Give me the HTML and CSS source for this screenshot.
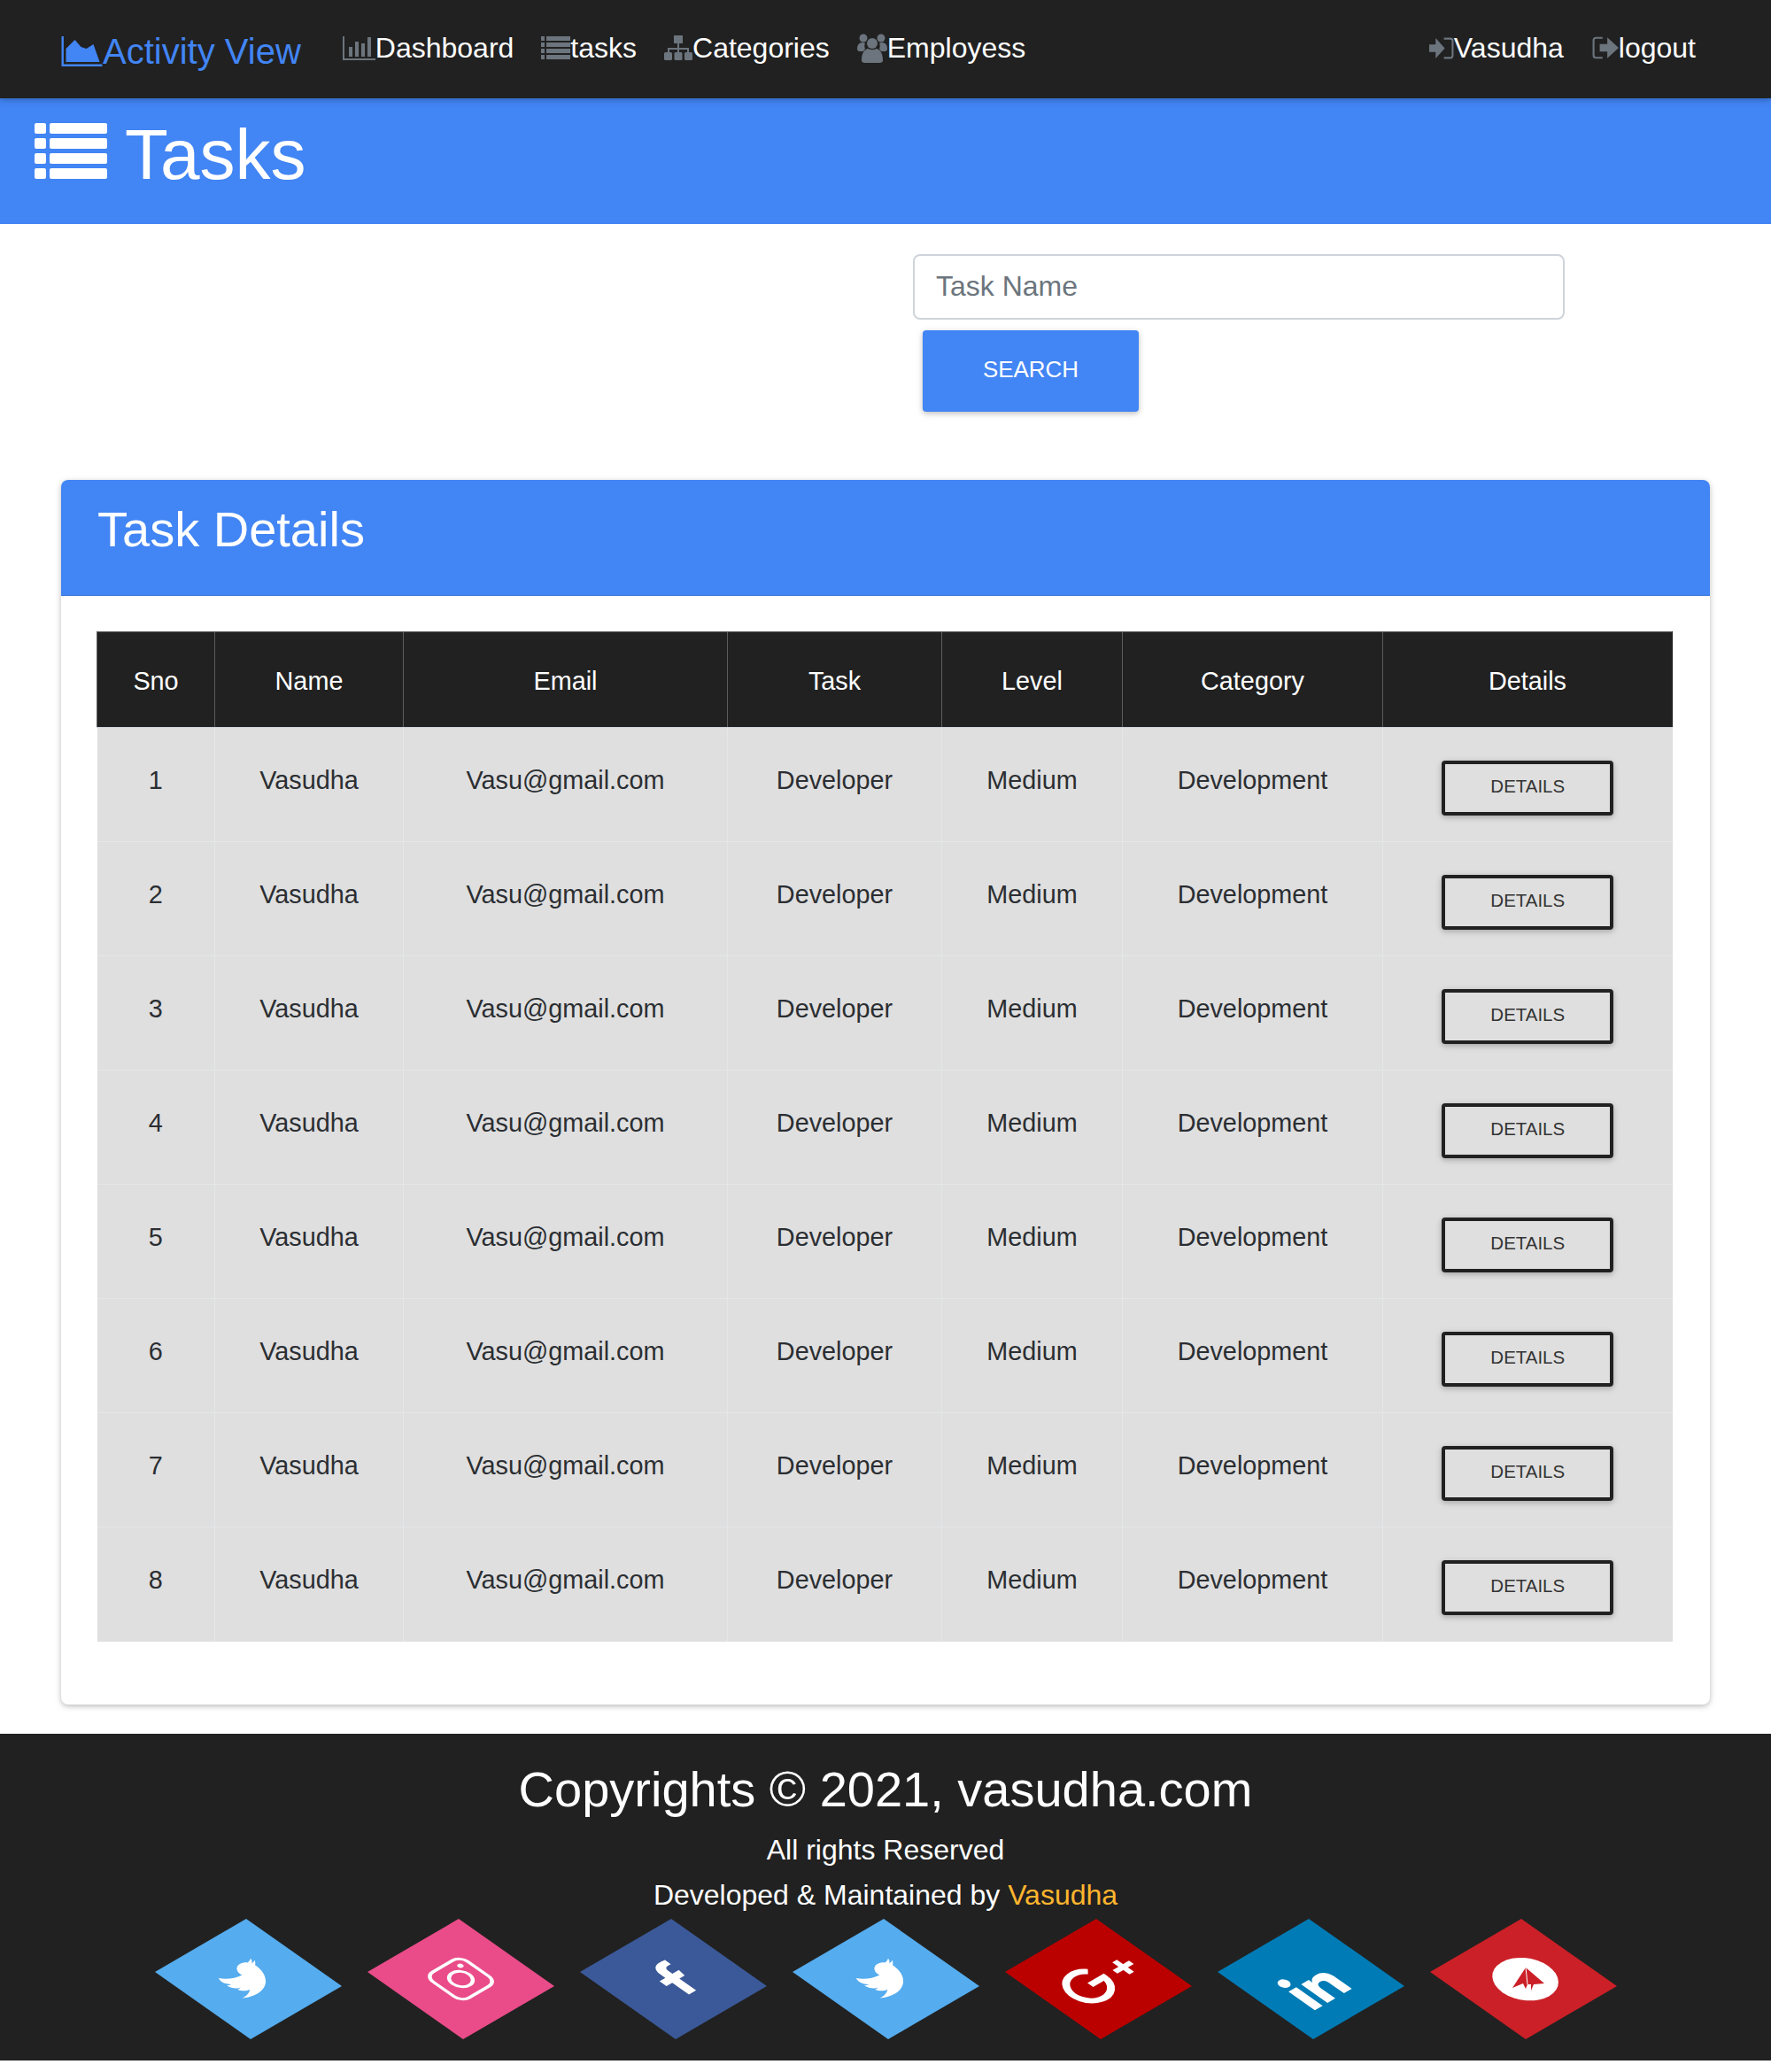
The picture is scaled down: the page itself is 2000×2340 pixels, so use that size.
FILE: index.html
```html
<!DOCTYPE html>
<html lang="en">
<head>
    <meta charset="UTF-8">
    <meta name="viewport" content="width=device-width, initial-scale=1.0">
    <title>Activity View - Tasks</title>
    <link rel="stylesheet" href="styles.css">
</head>
<body>

<nav class="navbar">
    <a class="brand" href="#">
        <svg class="brand-icon" viewBox="0 0 46 34"><path d="M1.2 0V32.8H46" fill="none" stroke="currentColor" stroke-width="2.4"/><path d="M5 29V14L15 4 22 12 28 14 36 9 43 29Z" fill="currentColor"/></svg>Activity View
    </a>
    <ul class="nav-links">
        <li><a href="#">
            <svg class="ico ico-bar" viewBox="0 0 37 27"><path d="M1 0V26H37" fill="none" stroke="currentColor" stroke-width="2"/><path d="M7 12h4v11H7zM14 6h4v17h-4zM21 8h4v15h-4zM28 1h4v22h-4z" fill="currentColor"/></svg>Dashboard</a></li>
        <li><a href="#">
            <svg class="ico ico-list" viewBox="0 0 33 26"><path d="M0 0h4v5H0zM6 0h27v5H6zM0 7h4v5H0zM6 7h27v5H6zM0 14h4v5H0zM6 14h27v5H6zM0 21h4v5H0zM6 21h27v5H6z" fill="currentColor"/></svg>tasks</a></li>
        <li><a href="#">
            <svg class="ico ico-map" viewBox="0 0 32 29"><path d="M11 0h10v9H11zM15 9h2v5h11v5h-2v-3H17v3h-2v-3H6v3H4v-5h11z" fill="currentColor"/><rect x="0" y="19" width="9" height="9" rx="1.5" fill="currentColor"/><rect x="11.5" y="19" width="9" height="9" rx="1.5" fill="currentColor"/><rect x="23" y="19" width="9" height="9" rx="1.5" fill="currentColor"/></svg>Categories</a></li>
        <li><a href="#">
            <svg class="ico ico-group" viewBox="0 0 34 33"><circle cx="7" cy="5" r="4.5" fill="currentColor"/><circle cx="27" cy="5" r="4.5" fill="currentColor"/><path d="M0 17c0-4 2-7 6-7 1 0 2 0 3 1-1 2-1 4 0 6l-2 3H3c-2 0-3-1-3-3zM34 17c0-4-2-7-6-7-1 0-2 0-3 1 1 2 1 4 0 6l2 3h4c2 0 3-1 3-3z" fill="currentColor"/><circle cx="17" cy="11" r="6" fill="currentColor"/><path d="M5 30c0-8 3-12 7-13 3 1.500 7 1.500 10 0 4 1 7 5 7 13 0 2-1 3-4 3H9c-3 0-4-1-4-3z" fill="currentColor"/></svg>Employess</a></li>
    </ul>
    <ul class="nav-links nav-right">
        <li><a href="#">
            <svg class="ico ico-in" viewBox="0 0 27 24"><path d="M0 8h7V1l10 11-10 11v-7H0z" fill="currentColor"/><path d="M16 1.500h7a2.500 2.500 0 0 1 2.500 2.500v16a2.500 2.500 0 0 1-2.500 2.500h-7" fill="none" stroke="currentColor" stroke-width="2"/></svg>Vasudha</a></li>
        <li><a href="#">
            <svg class="ico ico-out" viewBox="0 0 28 24"><path d="M11 1.500H4A2.500 2.500 0 0 0 1.500 4v16A2.500 2.500 0 0 0 4 22.500h7" fill="none" stroke="currentColor" stroke-width="2"/><path d="M8 8h8V1l12 11-12 11v-7H8z" fill="currentColor"/></svg>logout</a></li>
    </ul>
</nav>

<header class="page-head">
    <svg class="head-icon" viewBox="0 0 82 63"><g fill="#fff"><rect width="13" height="12" rx="2"/><rect x="17" width="65" height="12" rx="2"/><rect y="17" width="13" height="12" rx="2"/><rect x="17" y="17" width="65" height="12" rx="2"/><rect y="34" width="13" height="12" rx="2"/><rect x="17" y="34" width="65" height="12" rx="2"/><rect y="51" width="13" height="12" rx="2"/><rect x="17" y="51" width="65" height="12" rx="2"/></g></svg>
    <h1>Tasks</h1>
</header>

<form class="search-form">
    <input type="text" class="search-input" placeholder="Task Name">
    <button type="button" class="search-btn">SEARCH</button>
</form>

<section class="card">
    <div class="card-head">
        <h3>Task Details</h3>
    </div>
    <div class="card-body">
        <table class="task-table">
            <colgroup>
                <col class="col-sno"><col class="col-name"><col class="col-email"><col class="col-task"><col class="col-level"><col class="col-cat"><col class="col-det">
            </colgroup>
            <thead>
                <tr><th>Sno</th><th>Name</th><th>Email</th><th>Task</th><th>Level</th><th>Category</th><th>Details</th></tr>
            </thead>
            <tbody>
                <tr><td>1</td><td>Vasudha</td><td>Vasu@gmail.com</td><td>Developer</td><td>Medium</td><td>Development</td><td><button type="button" class="details-btn">DETAILS</button></td></tr>
                <tr><td>2</td><td>Vasudha</td><td>Vasu@gmail.com</td><td>Developer</td><td>Medium</td><td>Development</td><td><button type="button" class="details-btn">DETAILS</button></td></tr>
                <tr><td>3</td><td>Vasudha</td><td>Vasu@gmail.com</td><td>Developer</td><td>Medium</td><td>Development</td><td><button type="button" class="details-btn">DETAILS</button></td></tr>
                <tr><td>4</td><td>Vasudha</td><td>Vasu@gmail.com</td><td>Developer</td><td>Medium</td><td>Development</td><td><button type="button" class="details-btn">DETAILS</button></td></tr>
                <tr><td>5</td><td>Vasudha</td><td>Vasu@gmail.com</td><td>Developer</td><td>Medium</td><td>Development</td><td><button type="button" class="details-btn">DETAILS</button></td></tr>
                <tr><td>6</td><td>Vasudha</td><td>Vasu@gmail.com</td><td>Developer</td><td>Medium</td><td>Development</td><td><button type="button" class="details-btn">DETAILS</button></td></tr>
                <tr><td>7</td><td>Vasudha</td><td>Vasu@gmail.com</td><td>Developer</td><td>Medium</td><td>Development</td><td><button type="button" class="details-btn">DETAILS</button></td></tr>
                <tr><td>8</td><td>Vasudha</td><td>Vasu@gmail.com</td><td>Developer</td><td>Medium</td><td>Development</td><td><button type="button" class="details-btn">DETAILS</button></td></tr>
            </tbody>
        </table>
    </div>
</section>

<footer class="footer">
    <h2>Copyrights © 2021, vasudha.com</h2>
    <p class="rights">All rights Reserved</p>
    <p class="credit">Developed &amp; Maintained by <a href="#">Vasudha</a></p>
    <div class="socials">
        <!-- twitter -->
        <svg class="social" viewBox="0 0 211 136"><g transform="matrix(1.03 -0.6 1.08 0.76 0 60)"><rect width="100" height="100" fill="#55acee"/><path transform="translate(30 30) scale(.078)" fill="#fff" d="M459.37 151.716c.325 4.548.325 9.097.325 13.645 0 138.72-105.583 298.558-298.558 298.558-59.452 0-114.68-17.219-161.137-47.106 8.447.974 16.568 1.299 25.34 1.299 49.055 0 94.213-16.568 130.274-44.832-46.132-.975-84.792-31.188-98.112-72.772 6.498.974 12.995 1.624 19.818 1.624 9.421 0 18.843-1.3 27.614-3.573-48.081-9.747-84.143-51.98-84.143-102.985v-1.299c13.969 7.797 30.214 12.67 47.431 13.319-28.264-18.843-46.781-51.005-46.781-87.391 0-19.492 5.197-37.36 14.294-52.954 51.655 63.675 129.3 105.258 216.365 109.807-1.624-7.797-2.599-15.918-2.599-24.04 0-57.828 46.782-104.934 104.934-104.934 30.213 0 57.502 12.67 76.67 33.137 23.715-4.548 46.456-13.32 66.599-25.34-7.798 24.366-24.366 46.132-46.133 59.102 21.117-2.273 41.584-8.122 60.426-16.243-14.292 20.791-32.161 39.308-52.628 54.253z"/></g></svg>
        <!-- instagram -->
        <svg class="social" viewBox="0 0 211 136"><g transform="matrix(1.03 -0.6 1.08 0.76 0 60)"><rect width="100" height="100" fill="#ea4c89"/><rect x="31" y="31" width="38" height="38" rx="8" fill="none" stroke="#fff" stroke-width="3"/><circle cx="50" cy="50" r="9" fill="none" stroke="#fff" stroke-width="3"/><circle cx="61" cy="39" r="2.400" fill="#fff"/></g></svg>
        <!-- facebook -->
        <svg class="social" viewBox="0 0 211 136"><g transform="matrix(1.03 -0.6 1.08 0.76 0 60)"><rect width="100" height="100" fill="#3b5998"/><path transform="translate(38 30) scale(.078)" fill="#fff" d="M279.14 288l14.22-92.66h-88.91v-60.13c0-25.35 12.42-50.06 52.24-50.06h40.42V6.26S260.43 0 225.36 0c-73.22 0-121.08 44.38-121.08 124.72v70.62H22.89V288h81.39v224h100.17V288z"/></g></svg>
        <!-- twitter -->
        <svg class="social" viewBox="0 0 211 136"><g transform="matrix(1.03 -0.6 1.08 0.76 0 60)"><rect width="100" height="100" fill="#55acee"/><path transform="translate(30 30) scale(.078)" fill="#fff" d="M459.37 151.716c.325 4.548.325 9.097.325 13.645 0 138.72-105.583 298.558-298.558 298.558-59.452 0-114.68-17.219-161.137-47.106 8.447.974 16.568 1.299 25.34 1.299 49.055 0 94.213-16.568 130.274-44.832-46.132-.975-84.792-31.188-98.112-72.772 6.498.974 12.995 1.624 19.818 1.624 9.421 0 18.843-1.3 27.614-3.573-48.081-9.747-84.143-51.98-84.143-102.985v-1.299c13.969 7.797 30.214 12.67 47.431 13.319-28.264-18.843-46.781-51.005-46.781-87.391 0-19.492 5.197-37.36 14.294-52.954 51.655 63.675 129.3 105.258 216.365 109.807-1.624-7.797-2.599-15.918-2.599-24.04 0-57.828 46.782-104.934 104.934-104.934 30.213 0 57.502 12.67 76.67 33.137 23.715-4.548 46.456-13.32 66.599-25.34-7.798 24.366-24.366 46.132-46.133 59.102 21.117-2.273 41.584-8.122 60.426-16.243-14.292 20.791-32.161 39.308-52.628 54.253z"/></g></svg>
        <!-- google plus -->
        <svg class="social" viewBox="0 0 211 136"><g transform="matrix(1.03 -0.6 1.08 0.76 0 60)"><rect width="100" height="100" fill="#bb0000"/><path d="M50 39A17 17 0 1 0 55 51H40" fill="none" stroke="#fff" stroke-width="6"/><path d="M66 52H84M75 43V61" fill="none" stroke="#fff" stroke-width="5"/></g></svg>
        <!-- linkedin -->
        <svg class="social" viewBox="0 0 211 136"><g transform="matrix(1.03 -0.6 1.08 0.76 0 60)"><rect width="100" height="100" fill="#007bb5"/><path transform="translate(25 36) scale(.092)" fill="#fff" d="M100.28 448H7.4V148.9h92.88zM53.79 108.1C24.09 108.1 0 83.5 0 53.8a53.79 53.79 0 0 1 107.58 0c0 29.7-24.1 54.3-53.79 54.3zM447.9 448h-92.68V302.4c0-34.7-.7-79.2-48.29-79.2-48.29 0-55.69 37.7-55.69 76.7V448h-92.78V148.9h89.08v40.8h1.3c12.4-23.5 42.69-48.3 87.88-48.3 94 0 111.28 61.9 111.28 142.3V448z"/></g></svg>
        <!-- send -->
        <svg class="social" viewBox="0 0 211 136"><g transform="matrix(1.03 -0.6 1.08 0.76 0 60)"><rect width="100" height="100" fill="#cb2027"/><circle cx="51" cy="51" r="25" fill="#fff"/></g><path d="M108 55 93 78 105 73 108 79 110 74 114 74 114 81 117 74 129 73Z" fill="#cb2027"/><path d="M108 55 110 74" stroke="#fff" stroke-width="1"/></svg>
    </div>
</footer>

</body>
</html>
```

FILE: styles.css
```css
* {
    box-sizing: border-box;
}
body {
    margin: 0;
    font-family: "Liberation Sans", Arial, sans-serif;
    background-color: #fff;
    color: #212529;
}
a {
    text-decoration: none;
}
h1, h2, h3, p {
    margin: 0;
    font-weight: 400;
}

/* navbar */
.navbar {
    position: relative;
    display: flex;
    align-items: flex-start;
    height: 111px;
    padding: 28px 69px 0;
    background-color: #212121;
    box-shadow: 0 2px 5px rgba(0, 0, 0, 0.16), 0 2px 10px rgba(0, 0, 0, 0.12);
}
.brand {
    display: flex;
    align-items: center;
    font-size: 40px;
    line-height: 60px;
    color: #4285f4;
    margin-right: 31.5px;
}
.brand-icon {
    width: 47px;
    height: 34px;
}
.nav-links {
    display: flex;
    list-style: none;
    margin: 2px 0 0;
    padding: 0;
}
.nav-links a {
    display: flex;
    align-items: center;
    padding: 0 15.5px;
    font-size: 32px;
    line-height: 48px;
    color: #fff;
}
.nav-right {
    margin-left: auto;
}
.nav-right a {
    padding: 0 16px;
}
.ico {
    color: #6c757d;
    flex-shrink: 0;
}
.ico-bar {
    width: 37px;
    height: 27px;
}
.ico-list {
    width: 33px;
    height: 26px;
}
.ico-map {
    width: 32px;
    height: 29px;
}
.ico-group {
    width: 34px;
    height: 33px;
}
.ico-in {
    width: 28px;
    height: 25px;
}
.ico-out {
    width: 30px;
    height: 26px;
}

/* page heading */
.page-head {
    display: flex;
    align-items: flex-start;
    height: 142px;
    padding: 16px 0 0 39px;
    background-color: #4285f4;
}
.head-icon {
    width: 82px;
    height: 63px;
    margin: 12px 20px 0 0;
}
.page-head h1 {
    font-size: 80px;
    line-height: 96px;
    color: #fff;
}

/* search */
.search-form {
    width: 736px;
    margin: 34px 0 0 1031px;
}
.search-input {
    display: block;
    width: 100%;
    height: 74px;
    padding: 0 24px 2px;
    border: 2px solid #ced4da;
    border-radius: 8px;
    font-family: inherit;
    font-size: 32px;
    color: #495057;
}
.search-input::placeholder {
    color: #6c757d;
    opacity: 1;
}
.search-btn {
    display: block;
    width: 244px;
    height: 92px;
    margin: 12px 0 0 11px;
    padding: 0 0 3px;
    border: none;
    border-radius: 4px;
    background-color: #4285f4;
    color: #fff;
    font-family: inherit;
    font-size: 25.92px;
    box-shadow: 0 2px 5px rgba(0, 0, 0, 0.16), 0 2px 10px rgba(0, 0, 0, 0.12);
}

/* card */
.card {
    margin: 77px 69px 33px;
    border-radius: 8px;
    background-color: #fff;
    box-shadow: 0 2px 5px rgba(0, 0, 0, 0.16), 0 2px 10px rgba(0, 0, 0, 0.12);
}
.card-head {
    height: 131px;
    padding: 22px 41px 0;
    background-color: #4285f4;
    border-radius: 8px 8px 0 0;
    border-bottom: 1px solid #3b78dc;
}
.card-head h3 {
    font-size: 56px;
    line-height: 67px;
    color: #fff;
}
.card-body {
    padding: 40px 43px 71px 40px;
}
.task-table {
    width: 1779px;
    table-layout: fixed;
    border-collapse: collapse;
    text-align: center;
    font-size: 28.8px;
}
.col-sno { width: 133px; }
.col-name { width: 213px; }
.col-email { width: 366px; }
.col-task { width: 242px; }
.col-level { width: 204px; }
.col-cat { width: 294px; }
.col-det { width: 327px; }
.task-table th {
    height: 108px;
    padding: 3px 0 0;
    background-color: #212121;
    color: #fff;
    font-weight: 400;
    border: 1px solid #5c5c5c;
    border-left-color: #212121;
    border-bottom-color: #ced4da;
}
.task-table th:first-child {
    border-left-color: #5c5c5c;
}
.task-table th:last-child {
    border-right-color: #212121;
}
.task-table td {
    height: 129px;
    padding: 38px 0 0;
    vertical-align: top;
    line-height: 42px;
    background-color: #dfdfdf;
    color: #2b2e32;
    border: 1px solid #e4e6e8;
}
.task-table tbody tr:last-child td {
    border-bottom: none;
}
.task-table td:first-child {
    border-left: none;
}
.task-table td:last-child {
    border-right: none;
}
.details-btn {
    display: block;
    width: 194px;
    height: 62px;
    margin: -1px auto 0;
    padding: 0 0 4px;
    border: 4px solid #212121;
    border-radius: 4px;
    background: transparent;
    color: #333;
    font-family: inherit;
    font-size: 20.48px;
    box-shadow: 0 2px 5px rgba(0, 0, 0, 0.16), 0 2px 10px rgba(0, 0, 0, 0.12);
}

/* footer */
.footer {
    height: 369px;
    padding-top: 29px;
    background-color: #212121;
    text-align: center;
    color: #fff;
}
.footer h2 {
    font-size: 56px;
    line-height: 67px;
}
.footer p {
    font-size: 32px;
    line-height: 48px;
}
.rights {
    margin-top: 11px;
}
.credit {
    margin-top: 3px;
}
.credit a {
    color: #ffb52e;
}
.socials {
    display: flex;
    justify-content: center;
    gap: 29px;
    margin-top: 3px;
}
.social {
    width: 211px;
    height: 136px;
}
```
